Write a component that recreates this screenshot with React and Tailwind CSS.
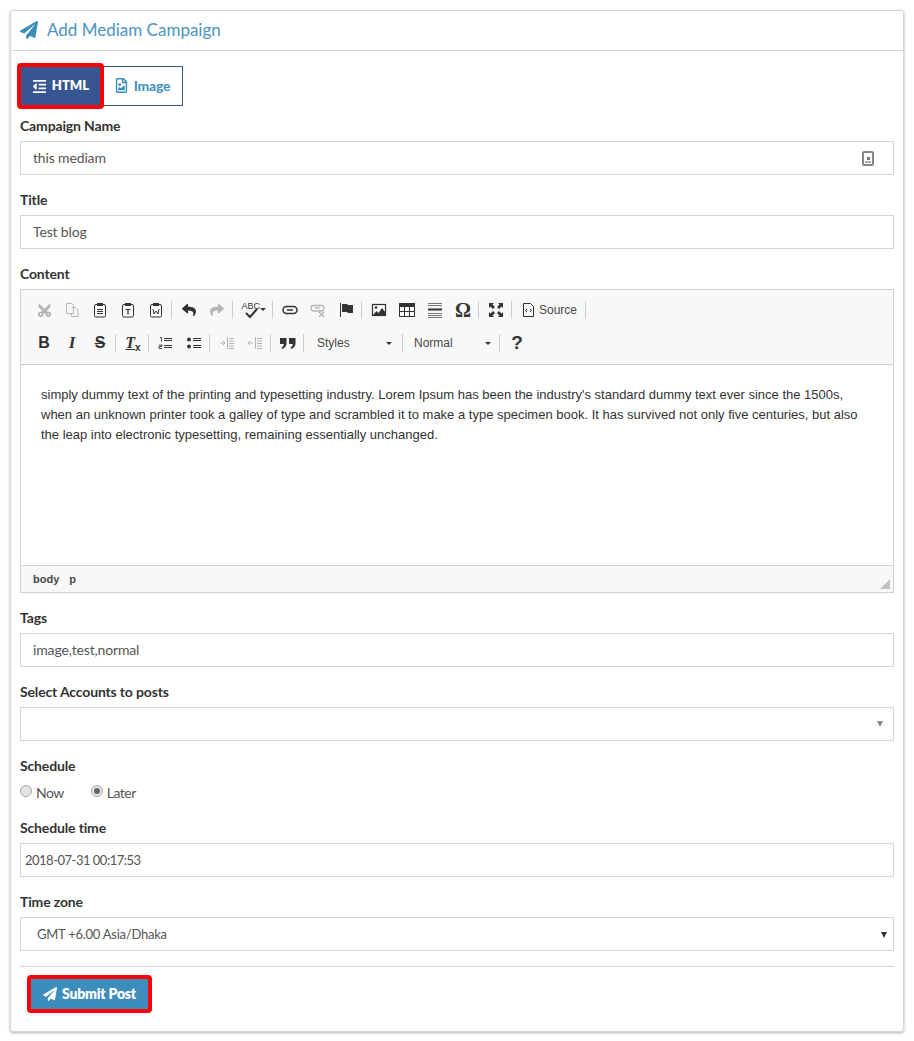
import React from 'react';
import { FaPaperPlane, FaOutdent, FaRegFileImage, FaCut, FaReply, FaShare } from 'react-icons/fa';

const ACTIVE = '#333333';
const DIM = '#b5b5b5';

function Glyph({ children, w = 16, h = 16, color = ACTIVE }) {
    return (
        <svg width={w} height={h} viewBox={`0 0 ${w} ${h}`} fill="none" stroke={color} strokeWidth="1" style={{ color }}>
            {children}
        </svg>
    );
}

function ToolBtn({ children, w = 'w-7' }) {
    return <div className={`${w} h-6 flex items-center justify-center shrink-0`}>{children}</div>;
}

function Sep() {
    return <div className="w-px h-[18px] bg-[#cfcfcf] ml-px mr-[3px] shrink-0" />;
}

// clipboard shape shared by the three paste buttons
function Paste({ inner }) {
    return (
        <Glyph>
            <rect x="2.5" y="2.5" width="11" height="12.5" rx="1.5" stroke={ACTIVE} />
            <rect x="5" y="1" width="6" height="3" fill={ACTIVE} stroke="none" />
            {inner}
        </Glyph>
    );
}

function Toolbar() {
    return (
        <div className="bg-[#f8f8f8] border-b border-[#d1d1d1] h-[75px] pl-[9px] pt-[8px] flex flex-col gap-[9px]">
            <div className="flex items-center h-6">
                <ToolBtn><FaCut size={15} color={DIM} style={{ transform: 'rotate(-90deg)' }} /></ToolBtn>
                <ToolBtn>
                    <Glyph color={DIM}>
                        <path d="M2.500 1.500h5l2 2v8h-7z M7.500 5.500h4l2.500 2.500v6.500h-6.500v-3" />
                    </Glyph>
                </ToolBtn>
                <ToolBtn><Paste inner={<path d="M5 7.500h6M5 9.500h6M5 11.500h6" />} /></ToolBtn>
                <ToolBtn><Paste inner={<path d="M5.500 7.500h5M8 7.500v5" strokeWidth="1.2" />} /></ToolBtn>
                <ToolBtn><Paste inner={<path d="M5 7l1 5 2-3 2 3 1-5" />} /></ToolBtn>
                <Sep />
                <ToolBtn><FaReply size={14} color={ACTIVE} /></ToolBtn>
                <ToolBtn><FaShare size={14} color={DIM} /></ToolBtn>
                <Sep />
                <ToolBtn w="w-[35px]">
                    <div className="relative w-[24px] h-[18px]">
                        <span className="absolute left-0 top-0 text-[9px] leading-[10px] font-['Liberation_Sans',sans-serif] text-[#333]">ABC</span>
                        <svg className="absolute left-[2px] top-[5px]" width="16" height="13" viewBox="0 0 16 13" fill="none" stroke={ACTIVE} strokeWidth="2">
                            <path d="M2 7l4 4 7-8" />
                        </svg>
                        <div className="absolute right-0 top-[7px] border-x-[3px] border-x-transparent border-t-[3px] border-t-[#333]" />
                    </div>
                </ToolBtn>
                <Sep />
                <ToolBtn>
                    <Glyph>
                        <rect x="1" y="4.500" width="14" height="7" rx="3.500" strokeWidth="1.500" />
                        <path d="M5 8h6" strokeWidth="1.500" />
                    </Glyph>
                </ToolBtn>
                <ToolBtn>
                    <Glyph color={DIM}>
                        <rect x="1" y="3.500" width="13" height="5.500" rx="2.700" strokeWidth="1.300" />
                        <path d="M5 6h5" strokeWidth="1.300" />
                        <path d="M9 10l5 5M14 10l-5 5" strokeWidth="1.400" />
                    </Glyph>
                </ToolBtn>
                <ToolBtn>
                    <Glyph>
                        <path d="M2.500 1v14" />
                        <path d="M4 2h5l1 1h5v8h-5l-1-1H4z" fill={ACTIVE} stroke="none" />
                    </Glyph>
                </ToolBtn>
                <Sep />
                <ToolBtn>
                    <Glyph>
                        <rect x="1.500" y="2.500" width="13" height="11" strokeWidth="1.200" />
                        <circle cx="5" cy="5.500" r="1.300" fill={ACTIVE} stroke="none" />
                        <path d="M2 13l3.500-4 2 2 3.500-5 3.500 4.500V13z" fill={ACTIVE} stroke="none" />
                    </Glyph>
                </ToolBtn>
                <ToolBtn>
                    <Glyph>
                        <rect x="0.500" y="1.500" width="15" height="13" />
                        <rect x="0.500" y="1.500" width="15" height="3" fill={ACTIVE} />
                        <path d="M5.500 4.500v10M10.500 4.500v10M0.500 9.500h15" />
                    </Glyph>
                </ToolBtn>
                <ToolBtn>
                    <Glyph>
                        <path d="M1 1.500h14M1 3.500h14" stroke="#777" />
                        <path d="M1 7.500h14" strokeWidth="2" />
                        <path d="M1 11.500h14M1 13.500h14M1 15.500h14" stroke="#777" />
                    </Glyph>
                </ToolBtn>
                <ToolBtn><span className="font-['Liberation_Serif',serif] text-[20px] leading-none font-bold text-[#333]">Ω</span></ToolBtn>
                <Sep />
                <ToolBtn>
                    <Glyph>
                        <path d="M1 1h5L4.500 2.500 7 5 5 7 2.500 4.500 1 6z M15 1v5l-1.500-1.500L11 7 9 5l2.500-2.500L10 1z M1 15v-5l1.500 1.500L5 9l2 2-2.500 2.500L6 15z M15 15h-5l1.500-1.500L9 11l2-2 2.500 2.500L15 10z" fill={ACTIVE} stroke="none" />
                    </Glyph>
                </ToolBtn>
                <Sep />
                <div className="w-[69px] shrink-0 flex items-center pl-[7px] gap-1">
                    <Glyph w={13} h={16}>
                        <path d="M1.500 1.500h7l3 3v10h-10z" />
                        <path d="M5 7l-1.500 1.500L5 10M8 7l1.500 1.500L8 10" />
                    </Glyph>
                    <span className="font-['Liberation_Sans',sans-serif] text-[12px] text-[#474747]">Source</span>
                </div>
                <Sep />
            </div>
            <div className="flex items-center h-6">
                <ToolBtn><span className="font-['Liberation_Sans',sans-serif] text-[16px] font-bold text-[#333]">B</span></ToolBtn>
                <ToolBtn><span className="font-['Liberation_Serif',serif] text-[17px] italic font-bold text-[#333]">I</span></ToolBtn>
                <ToolBtn><span className="font-['Liberation_Sans',sans-serif] text-[16px] font-bold text-[#333] line-through">S</span></ToolBtn>
                <Sep />
                <ToolBtn>
                    <span className="font-['Liberation_Serif',serif] text-[16px] italic font-bold text-[#333] underline">T</span>
                    <span className="font-['Liberation_Sans',sans-serif] text-[10px] font-bold text-[#333] mt-[8px]">x</span>
                </ToolBtn>
                <Sep />
                <ToolBtn>
                    <Glyph>
                        <path d="M6 3.500h8M6 5.500h8M6 10.500h8M6 12.500h8" />
                        <path d="M2 2.500h1.500v4M1 10h3v1.500H1v2h3" strokeWidth="0.900" />
                    </Glyph>
                </ToolBtn>
                <ToolBtn>
                    <Glyph>
                        <circle cx="3" cy="4.500" r="2" fill={ACTIVE} stroke="none" />
                        <circle cx="3" cy="11.500" r="2" fill={ACTIVE} stroke="none" />
                        <path d="M7 3.500h8M7 5.500h8M7 10.500h8M7 12.500h8" />
                    </Glyph>
                </ToolBtn>
                <Sep />
                <ToolBtn>
                    <Glyph color={DIM}>
                        <path d="M8.500 2v12M10 3.500h5M10 6h5M10 8.500h5M10 11h5M10 13.500h5M1 8h5M4 6l2 2-2 2" />
                    </Glyph>
                </ToolBtn>
                <ToolBtn>
                    <Glyph color={DIM}>
                        <path d="M8.500 2v12M10 3.500h5M10 6h5M10 8.500h5M10 11h5M10 13.500h5M6 8H1M3 6L1 8l2 2" />
                    </Glyph>
                </ToolBtn>
                <Sep />
                <ToolBtn>
                    <svg width="16" height="12" viewBox="0 0 16 12" fill={ACTIVE}>
                        <path d="M0 1h6.500v5.500C6.500 9 5 11 2 12l-.7-1.300C3 10 3.700 8.800 3.700 7H0z" />
                        <path d="M9 1h6.500v5.500C15.500 9 14 11 11 12l-.7-1.300C12 10 12.700 8.800 12.700 7H9z" />
                    </svg>
                </ToolBtn>
                <Sep />
                <div className="w-[94px] shrink-0 flex items-center justify-between pl-[10px] pr-[9px] font-['Liberation_Sans',sans-serif] text-[12px] text-[#484848]">
                    <span>Styles</span>
                    <div className="border-x-[3px] border-x-transparent border-t-[3px] border-t-[#333]" />
                </div>
                <Sep />
                <div className="w-[92px] shrink-0 flex items-center justify-between pl-2 pr-[7px] font-['Liberation_Sans',sans-serif] text-[12px] text-[#484848]">
                    <span>Normal</span>
                    <div className="border-x-[3px] border-x-transparent border-t-[3px] border-t-[#333]" />
                </div>
                <Sep />
                <ToolBtn><span className="font-['Liberation_Sans',sans-serif] text-[19px] font-bold text-[#333]">?</span></ToolBtn>
            </div>
        </div>
    );
}

function Field({ label, children }) {
    return (
        <div className="mb-[15px]">
            <label className="block text-[14px] leading-5 font-bold tracking-[-0.15px] text-[#333] mb-[5px]">{label}</label>
            {children}
        </div>
    );
}

function TextBox({ value, children, pad = 'px-3', text = 'text-[14px] tracking-[-0.15px] pb-[2px]' }) {
    return (
        <div className={`h-[34px] border border-[#d2d6de] ${pad} ${text} flex items-center justify-between text-[#555]`}>
            <span>{value}</span>
            {children}
        </div>
    );
}

function Radio({ checked, label }) {
    return (
        <div className="flex items-center gap-1">
            <div className="w-3 h-3 mb-[3px] rounded-full border border-[#a8a8a8] bg-[#e4e4e4] flex items-center justify-center">
                {checked && <div className="w-[6px] h-[6px] rounded-full bg-[#666]" />}
            </div>
            <span className="text-[14px] tracking-[-0.5px] text-[#555]">{label}</span>
        </div>
    );
}

export default function App() {
    return (
        <div className="min-h-[1041px] bg-white pt-[10px] pl-[10px] font-['Lato',sans-serif]">
            <div className="w-[894px] h-[1022px] bg-white border border-[#d2d6de] rounded-[3px] shadow-[0_1px_3px_rgba(0,0,0,0.3)]">
                <div className="h-10 border-b border-[#d2d6de] flex items-center pl-[9px] gap-[9px] text-[#3c8dbc]">
                    <FaPaperPlane size={18} className="mb-[2px]" />
                    <h3 className="text-[17px] pb-[2px] text-[#4d94bf]">Add Mediam Campaign</h3>
                </div>

                <div className="px-[9px] pt-[15px]">
                    <div className="flex mb-[10px]">
                        <button className="relative z-10 w-[81px] h-10 bg-[#365591] text-white text-[13px] font-extrabold flex items-center justify-center gap-[5px] rounded-[1px] outline-[4px] outline-[#ff0000] outline-offset-[-1px]">
                            <FaOutdent size={15} />
                            HTML
                        </button>
                        <button className="w-[82px] h-10 pb-px border border-[#365591] text-[#3c8dbc] text-[14px] font-bold tracking-[-0.2px] flex items-center justify-center gap-[5px]">
                            <FaRegFileImage size={15} />
                            Image
                        </button>
                    </div>

                    <Field label="Campaign Name">
                        <TextBox value="this mediam">
                            <div className="w-3 h-[15px] mr-[7px] mt-[2px] border-2 border-[#888] rounded-[2px] flex flex-col items-center justify-end pb-px gap-px">
                                <div className="w-[3px] h-[3px] bg-[#777]" />
                                <div className="w-[6px] h-[2px] bg-[#aaa]" />
                            </div>
                        </TextBox>
                    </Field>
                    <Field label="Title">
                        <TextBox value="Test blog" />
                    </Field>
                    <Field label="Content">
                        <div className="border border-[#d1d1d1]">
                            <Toolbar />
                            <div className="h-[200px] bg-white px-5 pt-5 font-['Liberation_Sans',sans-serif] text-[13px] leading-5 text-[#333]">
                                simply dummy text of the printing and typesetting industry. Lorem Ipsum has been the industry's standard dummy text ever since the 1500s, when an unknown printer took a galley of type and scrambled it to make a type specimen book. It has survived not only five centuries, but also the leap into electronic typesetting, remaining essentially unchanged.
                            </div>
                            <div className="h-[27px] bg-[#f8f8f8] border-t border-[#d1d1d1] flex items-center justify-between pl-3 pr-[3px] font-['Liberation_Sans',sans-serif] text-[11px] font-bold text-[#484848]">
                                <div className="flex gap-[10px]">
                                    <span>body</span>
                                    <span>p</span>
                                </div>
                                <div className="self-end mb-[3px] w-0 h-0 border-l-[10px] border-l-transparent border-b-[10px] border-b-[#c4c4c4]" />
                            </div>
                        </div>
                    </Field>
                    <Field label="Tags">
                        <TextBox value="image,test,normal" />
                    </Field>
                    <Field label="Select Accounts to posts">
                        <TextBox value="" pad="pl-3 pr-[10px]">
                            <div className="mt-[2px] border-x-[3px] border-x-transparent border-t-[6px] border-t-[#888]" />
                        </TextBox>
                    </Field>
                    <div className="mb-[15px]">
                        <label className="block text-[14px] leading-5 font-bold tracking-[-0.15px] text-[#333] mb-[5px]">Schedule</label>
                        <div className="h-[22px] flex items-center gap-[27px]">
                            <Radio label="Now" />
                            <Radio checked label="Later" />
                        </div>
                    </div>
                    <Field label="Schedule time">
                        <TextBox value="2018-07-31 00:17:53" pad="px-1" text="text-[13px] tracking-[-0.5px] pt-px" />
                    </Field>
                    <Field label="Time zone">
                        <TextBox value="GMT +6.00 Asia/Dhaka" pad="pl-4 pr-[6px]" text="text-[13px] tracking-[-0.25px] pt-px">
                            <div className="border-x-[3px] border-x-transparent border-t-[6px] border-t-[#333]" />
                        </TextBox>
                    </Field>

                    <hr className="border-[#d2d6de] mb-[11px]" />
                    <button className="ml-[10px] w-[119px] h-8 pb-px bg-[#3c8dbc] text-white text-[14px] font-extrabold tracking-[-0.2px] flex items-center justify-center gap-[5px] rounded-[1px] outline-[4px] outline-[#ff0000] outline-offset-[-1px]">
                        <FaPaperPlane size={14} />
                        Submit Post
                    </button>
                </div>
            </div>
        </div>
    );
}
